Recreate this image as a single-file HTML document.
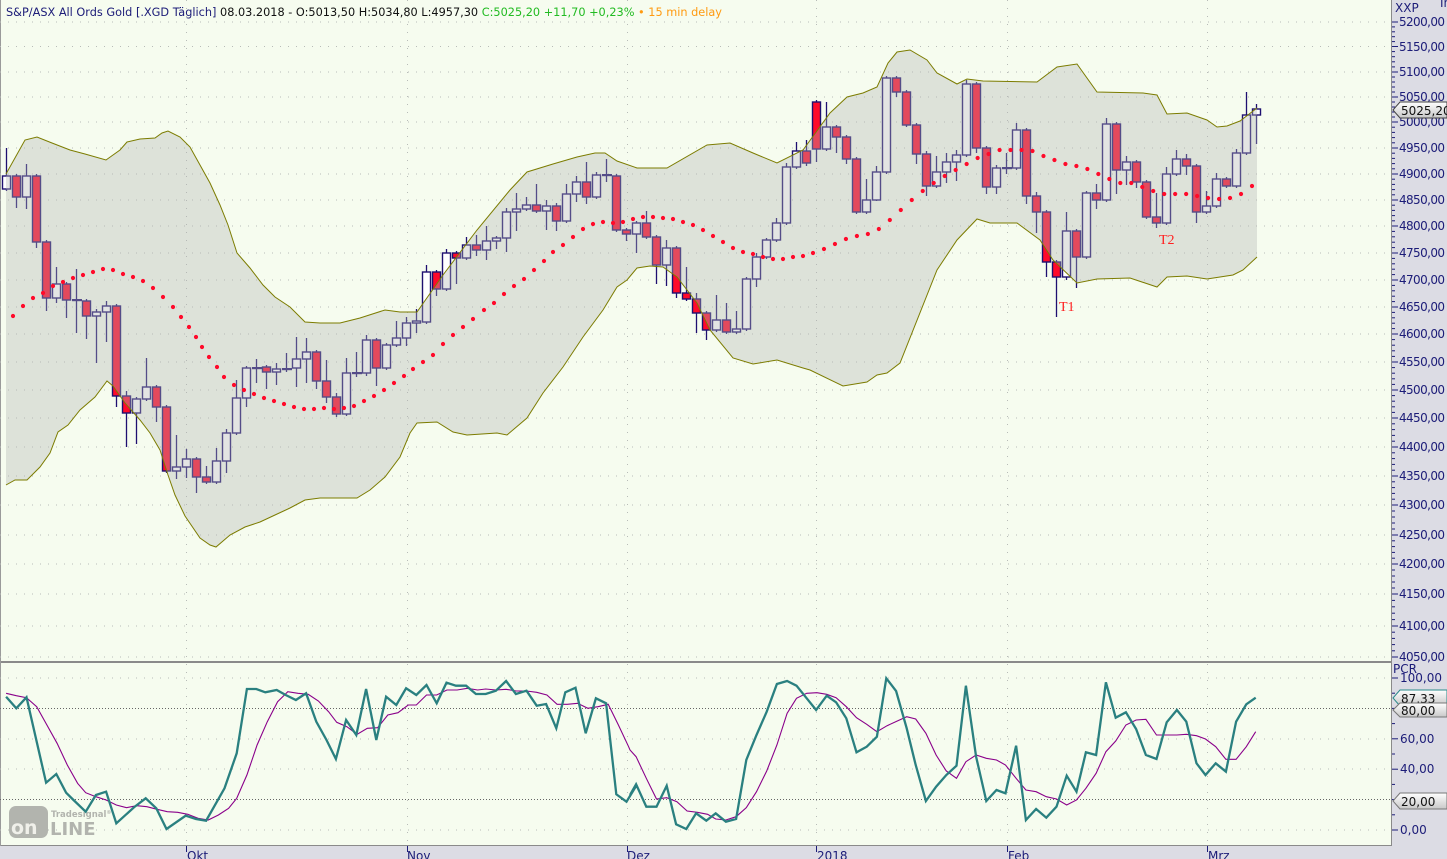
<!DOCTYPE html>
<html><head><meta charset="utf-8"><style>
html,body{margin:0;padding:0;background:#dcdce4;}
svg{display:block;font-family:"DejaVu Sans","Liberation Sans",sans-serif;}
.ax{fill:#1c1c78;font-size:12px;}
.ax text.p{}
</style></head><body>
<svg id="s" width="1447" height="859" viewBox="0 0 1447 859" xmlns="http://www.w3.org/2000/svg">
<rect x="0" y="0" width="1447" height="859" fill="#dcdce4"/>
<rect x="0" y="0" width="1392" height="661" fill="#f6fcef"/>
<rect x="0" y="663" width="1392" height="183" fill="#f6fcef"/>
<line x1="0" y1="662" x2="1392" y2="662" stroke="#8a8a8a" stroke-width="2"/>
<line x1="1391.5" y1="0" x2="1391.5" y2="846" stroke="#8a8a8a"/>
<line x1="0" y1="845.5" x2="1392" y2="845.5" stroke="#8a8a8a"/>
<line x1="0.5" y1="0" x2="0.5" y2="846" stroke="#9a9a9a"/>
<g id="grid" stroke="#b8bcb8" stroke-dasharray="1 7" stroke-width="1"></g>
<g id="candles"></g>
<g id="band"></g>
<g id="sma"></g>
<text x="1059" y="311" fill="#ff2020" font-family="Liberation Serif,serif" font-size="14">T1</text>
<text x="1159" y="244" fill="#ff2020" font-family="Liberation Serif,serif" font-size="14">T2</text>
<line x1="0" y1="708.5" x2="1392" y2="708.5" stroke="#666" stroke-dasharray="1 2"/>
<line x1="0" y1="799.5" x2="1392" y2="799.5" stroke="#666" stroke-dasharray="1 2"/>
<g id="logo">
<rect x="9" y="806" width="39" height="32" rx="7" fill="#b2b4ae"/>
<text x="11" y="834" font-size="19" font-weight="bold" fill="#f0f0ea" font-family="DejaVu Sans,sans-serif">on</text>
<text x="50" y="835" font-size="18" font-weight="bold" fill="#b2b4ae" font-family="DejaVu Sans,sans-serif">LINE</text>
<text x="51" y="817" font-size="8.5" font-weight="bold" fill="#b2b4ae" font-family="DejaVu Sans,sans-serif">Tradesignal<tspan font-size="5" dy="-3">®</tspan></text>
</g>
<g id="osc"></g>
<text x="6" y="16" font-size="11.2" textLength="716" lengthAdjust="spacingAndGlyphs"><tspan fill="#1c1c78">S&amp;P/ASX All Ords Gold [.XGD Täglich]</tspan><tspan fill="#111"> 08.03.2018 - O:5013,50 H:5034,80 L:4957,30 </tspan><tspan fill="#22bb22">C:5025,20 +11,70 +0,23%</tspan><tspan fill="#ff9a10"> • 15 min delay</tspan></text>
<g id="ticks" stroke="#1c1c78"></g>
<text x="1395" y="12" class="ax">XXP</text>
<text x="1440" y="7" class="ax" font-size="7">In</text>
<g class="ax">
<text x="1399" y="26" textLength="46">5200,00</text><text x="1399" y="51" textLength="46">5150,00</text><text x="1399" y="76" textLength="46">5100,00</text><text x="1399" y="101" textLength="46">5050,00</text>
<text x="1399" y="152" textLength="46">4950,00</text><text x="1399" y="178" textLength="46">4900,00</text><text x="1399" y="204" textLength="46">4850,00</text><text x="1399" y="230" textLength="46">4800,00</text>
<text x="1399" y="257" textLength="46">4750,00</text><text x="1399" y="284" textLength="46">4700,00</text><text x="1399" y="311" textLength="46">4650,00</text><text x="1399" y="338" textLength="46">4600,00</text>
<text x="1399" y="366" textLength="46">4550,00</text><text x="1399" y="394" textLength="46">4500,00</text><text x="1399" y="422" textLength="46">4450,00</text><text x="1399" y="451" textLength="46">4400,00</text>
<text x="1399" y="480" textLength="46">4350,00</text><text x="1399" y="509" textLength="46">4300,00</text><text x="1399" y="539" textLength="46">4250,00</text><text x="1399" y="568" textLength="46">4200,00</text>
<text x="1399" y="598" textLength="46">4150,00</text><text x="1399" y="630" textLength="46">4100,00</text><text x="1399" y="661" textLength="46">4050,00</text>
<text x="1399" y="126" textLength="46">5000,00</text>
<text x="1393" y="673">PCR</text>
<text x="1400" y="682">100,00</text><text x="1400" y="743">60,00</text><text x="1400" y="773">40,00</text><text x="1400" y="834">0,00</text>
</g>
<defs><linearGradient id="lg" x1="0" y1="0" x2="0" y2="1"><stop offset="0" stop-color="#ffffff"/><stop offset="1" stop-color="#c8c8c8"/></linearGradient></defs>
<g font-size="12" fill="#111">
<path d="M1393,110 L1400,102 H1447 V118 H1400 Z" fill="url(#lg)" stroke="#444"/><text x="1401" y="115">5025,20</text>
<path d="M1393,698 L1400,690 H1447 V706 H1400 Z" fill="url(#lg)" stroke="#2a8a8a"/><text x="1401" y="703">87,33</text>
<path d="M1393,710 L1400,703 H1447 V717 H1400 Z" fill="url(#lg)" stroke="#777"/><text x="1401" y="715">80,00</text>
<path d="M1393,801 L1400,793 H1447 V809 H1400 Z" fill="url(#lg)" stroke="#777"/><text x="1401" y="806">20,00</text>
</g>
<g stroke="#1c1c78"><line x1="186.5" y1="846" x2="186.5" y2="852"/><line x1="407.5" y1="846" x2="407.5" y2="852"/><line x1="627.5" y1="846" x2="627.5" y2="852"/><line x1="816.5" y1="846" x2="816.5" y2="852"/><line x1="1007.5" y1="846" x2="1007.5" y2="852"/><line x1="1207.5" y1="846" x2="1207.5" y2="852"/></g>
<g class="ax" font-size="11.5"><text x="187" y="860">Okt</text><text x="407" y="860">Nov</text><text x="627" y="860">Dez</text><text x="817" y="860">2018</text><text x="1008" y="860">Feb</text><text x="1208" y="860">Mrz</text></g>
</svg>
<script>
var NS="http://www.w3.org/2000/svg";
function el(p,t,a){var e=document.createElementNS(NS,t);for(var k in a)e.setAttribute(k,a[k]);document.getElementById(p).appendChild(e);return e;}
var gy=[22,46.5,72,97,122,148,174,200,226,253,280,307,334,362,390,418,447,476,505,535,564,594,626,657];
gy.forEach(function(y){el("grid","line",{x1:0,x2:1391,y1:y,y2:y});el("ticks","line",{x1:1392,x2:1398,y1:y,y2:y});});
for(var i=0;i<gy.length-1;i++){for(var k=1;k<5;k++){var y=gy[i]+(gy[i+1]-gy[i])*k/5;el("ticks","line",{x1:1392,x2:1395,y1:y,y2:y});}}
[678,739,769,830].forEach(function(y){el("grid","line",{x1:0,x2:1391,y1:y,y2:y});});
for(var v=0;v<=100;v+=10){var y=830-1.52*v;el("ticks","line",{x1:1392,x2:(v%20==0?1398:1395),y1:y,y2:y});}
[186,407,627,816,1007,1207].forEach(function(x){el("grid","line",{x1:x+.5,x2:x+.5,y1:0,y2:845});});
var C=[[176,189,0,148,0],[176,197,1,0,208],[176,197,0,164,209],[176,242,1,0,248],[242,298,1,0,311],[284,298,0,267,303],[284,300,1,0,318],[300,300,0,269,333],[301,316,1,0,339],[312,316,0,309,363],[306,312,0,301,342],[306,396,1,0,407],[396,413,1,391,447],[399,413,0,0,444],[387,399,0,358,0],[387,407,1,0,422],[407,471,1,0,0],[467,471,0,435,479],[459,467,0,449,478],[459,477,1,0,493],[477,482,1,466,0],[461,482,0,448,0],[433,461,0,429,473],[398,433,0,380,0],[368,398,0,0,407],[368,368,0,359,383],[367,372,1,0,389],[369,372,0,363,385],[369,369,0,353,372],[359,368,0,337,387],[352,359,0,338,383],[352,381,1,0,389],[381,397,1,360,403],[397,414,1,393,417],[373,414,0,358,0],[373,373,0,352,377],[340,373,0,335,376],[340,368,1,338,386],[345,368,0,0,0],[338,345,0,321,347],[323,338,0,317,346],[321,323,0,309,333],[272,322,0,265,0],[272,289,1,0,296],[253,289,0,249,0],[253,258,1,0,284],[245,258,0,237,0],[245,250,1,235,256],[241,250,0,226,260],[238,241,0,236,249],[212,238,0,208,252],[209,212,0,193,231],[205,209,0,197,211],[205,211,1,184,213],[206,211,0,200,230],[206,221,1,203,231],[194,221,0,184,0],[182,194,0,176,202],[182,197,1,162,204],[175,197,0,172,0],[175,175,0,159,182],[176,230,1,0,0],[230,234,1,0,241],[223,234,0,0,253],[223,237,1,211,0],[237,265,1,0,284],[248,265,0,240,286],[248,293,1,0,298],[293,299,1,267,0],[299,313,1,293,333],[313,330,1,0,340],[320,330,0,295,0],[320,332,1,303,0],[329,332,0,311,0],[279,329,0,0,0],[257,279,0,253,287],[240,257,0,238,0],[223,240,0,218,0],[167,223,0,163,0],[151,167,0,142,169],[151,163,1,140,166],[102,149,1,100,162],[127,149,0,102,0],[127,137,1,0,153],[137,159,1,135,164],[159,212,1,0,0],[200,212,0,179,0],[172,200,0,166,201],[78,172,0,0,0],[78,92,1,0,97],[92,125,1,0,0],[125,154,1,0,164],[154,186,1,151,196],[172,186,0,156,0],[162,172,0,153,183],[155,162,0,150,181],[84,155,0,80,0],[84,148,1,0,153],[148,187,1,0,194],[168,187,0,165,194],[168,168,0,153,174],[130,168,0,123,0],[130,196,1,0,204],[196,212,1,192,233],[212,262,1,0,277],[262,277,1,0,317],[231,277,0,212,280],[231,257,1,0,288],[193,257,0,0,0],[193,200,1,184,209],[124,200,0,118,0],[124,170,1,0,194],[162,170,0,156,185],[162,182,1,0,188],[182,217,1,0,0],[217,223,1,193,228],[174,223,0,167,0],[159,174,0,150,0],[159,166,1,154,175],[166,212,1,0,223],[206,212,0,191,214],[179,206,0,173,0],[179,186,1,177,188],[153,186,0,149,0],[115,153,0,92,0],[109,115,0,104,144]];
C.forEach(function(c,i){var x=6+10*i;var wt=c[3]||c[0]-2,wb=c[4]||c[1]+2;
el("candles","line",{x1:x+.5,x2:x+.5,y1:wt,y2:wb,stroke:"#1e0f70","stroke-width":1.3});
var h=Math.max(c[1]-c[0],1);
if(h<=1)el("candles","rect",{x:x-4,y:c[0]-1,width:10,height:2.2,fill:"#1e0f70"});
else el("candles","rect",{x:x-3.5,y:c[0],width:8,height:h,fill:c[2]?"#ff0a2a":"#ffffff",stroke:"#1e0f70","stroke-width":1.4});});
var U=[[6,174],[25,140],[37,137],[52,143],[70,150],[85,154],[106,160],[120,150],[127,142],[140,139],[155,138],[162,133],[168,131],[180,137],[190,147],[200,165],[210,183],[220,205],[228,225],[237,253],[250,268],[263,285],[275,297],[290,307],[305,322],[320,323],[340,323],[360,318],[385,310],[400,312],[417,312],[443,275],[477,230],[510,190],[527,172],[553,164],[577,157],[595,153],[605,153],[617,161],[637,168],[667,168],[707,145],[730,143],[753,153],[777,163],[803,150],[830,113],[847,97],[863,93],[877,87],[888,63],[897,52],[910,50],[927,60],[937,73],[957,84],[967,79],[983,81],[1037,82],[1057,67],[1077,64],[1097,92],[1143,93],[1157,95],[1167,114],[1187,113],[1207,120],[1217,127],[1227,126],[1240,121],[1257,108]];
var L=[[6,485],[15,480],[27,480],[40,467],[50,453],[58,432],[68,425],[80,410],[95,397],[107,381],[113,386],[125,403],[140,420],[150,433],[160,450],[168,475],[175,495],[185,516],[200,538],[210,545],[216,547],[230,535],[245,527],[260,522],[275,515],[290,508],[305,500],[320,498],[357,498],[370,490],[385,477],[400,457],[410,433],[417,423],[437,422],[453,432],[467,435],[497,433],[507,435],[527,418],[543,393],[563,367],[583,337],[603,310],[617,287],[627,280],[637,268],[650,266],[663,267],[677,277],[697,303],[710,330],[733,358],[753,364],[777,360],[803,368],[810,370],[843,386],[867,382],[877,375],[887,373],[900,363],[937,270],[957,240],[977,219],[990,223],[1017,223],[1040,240],[1053,260],[1077,283],[1097,279],[1130,278],[1157,287],[1167,277],[1187,276],[1207,279],[1233,275],[1243,270],[1257,257]];
function pts(a){return a.map(function(p){return p[0]+","+p[1]}).join(" ");}
el("band","polygon",{points:pts(U)+" "+pts(L.slice().reverse()),fill:"rgb(180,182,180)","fill-opacity":0.37});
el("band","polyline",{points:pts(U),fill:"none",stroke:"#7c7c00","stroke-width":1});
el("band","polyline",{points:pts(L),fill:"none",stroke:"#7c7c00","stroke-width":1});
var S1=[[13,316],[23,306],[33,298],[43,293],[53,286],[63,282],[73,278],[83,275],[93,272],[103,269],[113,270],[123,274],[133,277],[143,281],[153,288],[163,297],[173,307],[181,317],[189,327],[196,337],[202,347],[209,357],[217,367],[224,377],[234,385],[244,390],[254,394],[264,398],[274,401],[284,404],[294,407],[304,409],[314,409],[324,408],[334,409],[344,408],[354,406],[364,401],[374,396],[384,390],[394,383],[404,376],[413,369],[423,362],[433,355],[443,344],[453,335],[463,327],[473,319],[484,310],[494,303],[504,294],[514,286],[524,279],[534,270],[544,261],[553,252],[563,245],[573,237],[583,229],[593,224],[603,222],[613,223],[623,222],[633,219],[643,217],[653,217],[663,218],[673,219],[683,222],[693,225],[703,230],[713,236],[723,242],[733,248],[743,252],[753,254],[763,257],[773,259],[783,259],[793,257],[803,256]];
var S2y=[253,249,244,239,236,234,229,220,210,200,191,183,176,170,164,158,154,150,150,150,151,156,160,164,166,169,174,179,183,183,187,191,194,194,194,196,198,199,198,194,186];
S2y.forEach(function(y,k){S1.push([813+k*(1252-813)/(S2y.length-1),y]);});
S1.forEach(function(p){el("sma","circle",{cx:p[0],cy:p[1],r:2.1,fill:"#ff0a2a"});});
function conv(a,off){return a.map(function(p){return [(p[0]/2.45+off).toFixed(1),(p[1]/3+665).toFixed(1)];});}
var T8=[[15,95],[40,130],[65,97],[113,353],[138,327],[162,383],[180,405],[210,440],[235,390],[260,380],[285,475],[330,425],[357,400],[383,430],[408,492],[455,452],[480,462],[505,467],[550,370],[580,265],[605,72],[628,72],[650,82],[678,75],[700,90],[725,105],[750,85],[775,170],[800,225],[823,282],[848,165],[873,210],[897,72],[922,225],[946,95],[971,120],[995,70],[1020,90],[1045,60],[1070,115],[1094,53],[1117,62],[1142,62],[1166,87],[1190,87],[1215,77],[1240,48],[1264,87],[1290,77],[1315,122],[1338,117],[1363,190],[1385,82],[1410,68],[1435,205],[1460,100],[1485,115],[1510,388],[1535,410],[1560,360]];
var T9=[[0,390],[15,358],[40,425],[65,425],[90,362],[113,478],[138,492],[162,445],[187,467],[210,445],[235,470],[260,462],[285,285],[310,210],[335,140],[360,57],[385,48],[408,62],[433,100],[456,135],[482,92],[505,112],[530,160],[555,262],[580,245],[605,215],[628,40],[652,78],[678,190],[700,300],[725,408],[750,365],[775,330],[800,302],[823,62],[848,275],[873,408],[898,375],[920,385],[946,242],[970,465],[995,432],[1020,458],[1045,425],[1070,332],[1094,380],[1117,262],[1142,270],[1166,52],[1190,158],[1215,142],[1240,192],[1264,270],[1290,282],[1315,172],[1340,135],[1363,170],[1388,295],[1410,330],[1435,295],[1460,320],[1485,170],[1510,118],[1533,98]];
var P8=[[15,85],[40,92],[65,98],[90,125],[115,180],[140,235],[165,300],[190,355],[210,383],[235,395],[260,405],[285,420],[310,428],[335,422],[360,425],[385,433],[410,440],[435,442],[460,448],[485,460],[510,465],[535,450],[560,430],[580,400],[605,330],[630,240],[655,170],[680,110],[705,80],[730,85],[755,88],[780,108],[805,140],[825,172],[850,185],[875,208],[900,190],[925,188],[950,150],[975,143],[1000,120],[1020,120],[1045,90],[1070,90],[1095,75],[1120,75],[1145,70],[1170,75],[1190,72],[1215,75],[1240,73],[1265,78],[1290,78],[1315,82],[1340,90],[1365,118],[1390,118],[1415,115],[1440,130],[1465,125],[1490,118],[1515,180],[1540,245]];
var P9=[[0,255],[15,275],[40,340],[65,402],[90,398],[115,410],[140,438],[165,442],[190,448],[210,462],[235,465],[260,455],[285,428],[310,380],[335,318],[360,240],[385,145],[408,100],[433,85],[458,83],[482,88],[505,98],[530,125],[555,158],[580,178],[605,200],[630,182],[655,168],[678,155],[700,162],[725,205],[750,270],[775,318],[800,340],[823,290],[848,270],[873,280],[898,285],[920,300],[946,340],[970,375],[995,380],[1020,395],[1045,402],[1070,420],[1094,405],[1117,370],[1142,325],[1166,260],[1190,228],[1215,180],[1240,165],[1264,163],[1290,210],[1315,210],[1340,210],[1363,208],[1388,212],[1410,222],[1435,245],[1460,283],[1485,283],[1510,245],[1533,200]];
var tp=conv(T8,0).concat(conv(T9,630)),pp=conv(P8,0).concat(conv(P9,630));
el("osc","polyline",{points:pts(pp),fill:"none",stroke:"#8a008a","stroke-width":1.1});
el("osc","polyline",{points:pts(tp),fill:"none",stroke:"#2a8080","stroke-width":2.3,"stroke-linejoin":"miter"});
</script>
</body></html>
